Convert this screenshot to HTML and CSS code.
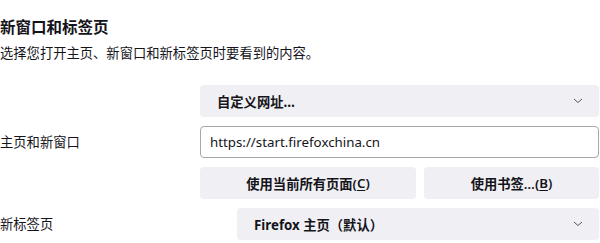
FILE: index.html
```html
<!DOCTYPE html>
<html lang="zh-CN">
<head>
<meta charset="utf-8">
<link rel="stylesheet" href="styles.css">
</head>
<body>
<div class="page">
  <h1 class="title">新窗口和标签页</h1>
  <p class="desc">选择您打开主页、新窗口和新标签页时要看到的内容。</p>
  <div class="grid">
    <div class="label"></div>
    <div class="select">
      <span>自定义网址…</span>
      <svg class="chev" width="10" height="6" viewBox="0 0 10 6"><path d="M1 1 L5 4.5 L9 1" fill="none" stroke="#55555f" stroke-width="1"/></svg>
    </div>
    <div class="label">主页和新窗口</div>
    <div class="input">https://start.firefoxchina.cn</div>
    <div class="label"></div>
    <div class="buttons">
      <div class="btn btn-a">使用当前所有页面(<u>C</u>)</div>
      <div class="btn btn-b">使用书签…(<u>B</u>)</div>
    </div>
    <div class="label">新标签页</div>
    <div class="select indent">
      <span>Firefox 主页（默认）</span>
      <svg class="chev" width="10" height="6" viewBox="0 0 10 6"><path d="M1 1 L5 4.5 L9 1" fill="none" stroke="#55555f" stroke-width="1"/></svg>
    </div>
  </div>
</div>
</body>
</html>
```
FILE: styles.css
```css
html, body {
  margin: 0;
  padding: 0;
  background: #ffffff;
}
body {
  font-family: "Noto Sans", "Noto Sans CJK SC", sans-serif;
  color: #15141a;
  font-size: 13.3px;
}
.page {
  width: 599px;
  padding-top: 16px;
}
.title {
  margin: 0;
  font-size: 15.5px;
  font-weight: 700;
  line-height: 22px;
}
.desc {
  margin: 5px 0 0 0;
  line-height: 20px;
}
.grid {
  margin-top: 22px;
  display: grid;
  grid-template-columns: 200px 1fr;
  row-gap: 9px;
  align-items: center;
}
.label {
  line-height: 20px;
}
.select {
  height: 32px;
  box-sizing: border-box;
  background: #f0f0f4;
  border-radius: 4px;
  display: flex;
  align-items: center;
  justify-content: space-between;
  padding: 0 16px 0 17px;
  font-weight: 700;
}
.select.indent {
  margin-left: 37px;
}
.chev {
  display: block;
}
.input {
  height: 32px;
  box-sizing: border-box;
  border: 1px solid #a7a7ae;
  border-radius: 4px;
  display: flex;
  align-items: center;
  padding: 0 9px;
}
.buttons {
  display: flex;
  gap: 8px;
}
.btn {
  height: 32px;
  box-sizing: border-box;
  background: #f0f0f4;
  border-radius: 4px;
  display: flex;
  align-items: center;
  justify-content: center;
  font-weight: 600;
}
.btn-a {
  flex: 0 0 216px;
}
.btn-b {
  flex: 1 1 auto;
}
u {
  text-underline-offset: 2px;
}
```
